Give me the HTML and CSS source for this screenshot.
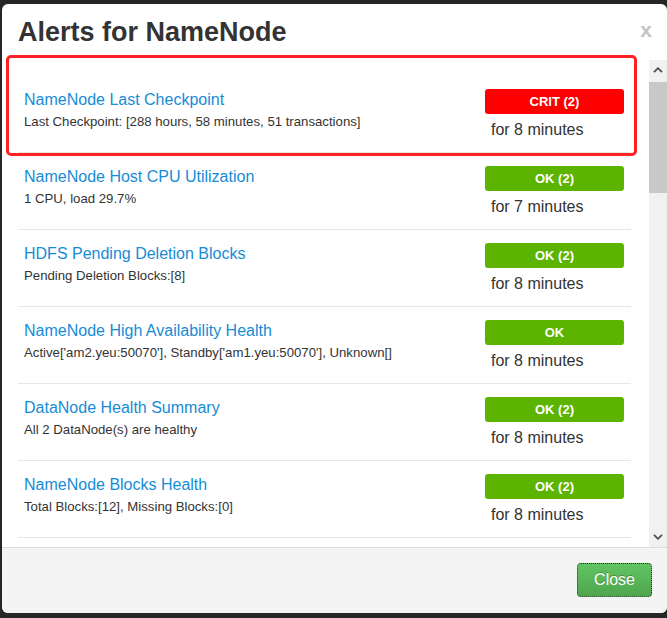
FILE: index.html
```html
<!DOCTYPE html>
<html>
<head>
<meta charset="utf-8">
<link rel="stylesheet" href="styles.css">
</head>
<body>
<div class="modal">
  <div class="modal-header">
    <h3 class="modal-title">Alerts for NameNode</h3>
    <span class="close">x</span>
  </div>
  <div class="modal-body">
    <div class="content">
      <ul class="alerts">
        <li class="alert">
          <div class="info">
            <a class="name">NameNode Last Checkpoint</a>
            <div class="desc">Last Checkpoint: [288 hours, 58 minutes, 51 transactions]</div>
          </div>
          <div class="state">
            <span class="badge crit">CRIT (2)</span>
            <div class="since">for 8 minutes</div>
          </div>
        </li>
        <li class="alert">
          <div class="info">
            <a class="name">NameNode Host CPU Utilization</a>
            <div class="desc">1 CPU, load 29.7%</div>
          </div>
          <div class="state">
            <span class="badge ok">OK (2)</span>
            <div class="since">for 7 minutes</div>
          </div>
        </li>
        <li class="alert">
          <div class="info">
            <a class="name">HDFS Pending Deletion Blocks</a>
            <div class="desc">Pending Deletion Blocks:[8]</div>
          </div>
          <div class="state">
            <span class="badge ok">OK (2)</span>
            <div class="since">for 8 minutes</div>
          </div>
        </li>
        <li class="alert">
          <div class="info">
            <a class="name">NameNode High Availability Health</a>
            <div class="desc">Active['am2.yeu:50070'], Standby['am1.yeu:50070'], Unknown[]</div>
          </div>
          <div class="state">
            <span class="badge ok">OK</span>
            <div class="since">for 8 minutes</div>
          </div>
        </li>
        <li class="alert">
          <div class="info">
            <a class="name">DataNode Health Summary</a>
            <div class="desc">All 2 DataNode(s) are healthy</div>
          </div>
          <div class="state">
            <span class="badge ok">OK (2)</span>
            <div class="since">for 8 minutes</div>
          </div>
        </li>
        <li class="alert">
          <div class="info">
            <a class="name">NameNode Blocks Health</a>
            <div class="desc">Total Blocks:[12], Missing Blocks:[0]</div>
          </div>
          <div class="state">
            <span class="badge ok">OK (2)</span>
            <div class="since">for 8 minutes</div>
          </div>
        </li>
      </ul>
    </div>
    <div class="scrollbar">
      <div class="sb-btn">
        <svg width="10" height="6" viewBox="0 0 10 6"><path d="M1 5.2 L5 1.2 L9 5.2" fill="none" stroke="#505050" stroke-width="1.8"/></svg>
      </div>
      <div class="sb-track"><div class="sb-thumb"></div></div>
      <div class="sb-btn">
        <svg width="10" height="6" viewBox="0 0 10 6"><path d="M1 0.8 L5 4.8 L9 0.8" fill="none" stroke="#505050" stroke-width="1.8"/></svg>
      </div>
    </div>
  </div>
  <div class="modal-footer">
    <button class="btn-close">Close</button>
  </div>
  <div class="highlight"></div>
</div>
</body>
</html>
```
FILE: styles.css
```css
html, body {
  margin: 0;
  padding: 0;
  height: 100%;
  overflow: hidden;
}
body {
  background: #262626;
  font-family: "Liberation Sans", Arial, sans-serif;
  color: #333;
}
.modal {
  position: relative;
  margin: 4px 0 0 2px;
  width: 665px;
  height: 609px;
  background: #fff;
  border-radius: 6px;
  display: flex;
  flex-direction: column;
  overflow: hidden;
}
.modal-header {
  height: 56px;
  flex: none;
  display: flex;
  align-items: flex-start;
  justify-content: space-between;
  padding: 0 15px 0 16px;
  box-sizing: border-box;
}
.modal-title {
  margin: 13px 0 0 0;
  font-size: 27px;
  line-height: 30px;
  font-weight: bold;
  color: #333;
}
.close {
  margin-top: 14px;
  font-size: 21px;
  line-height: 24px;
  font-weight: bold;
  color: #c4c4c4;
}
.modal-body {
  height: 487px;
  flex: none;
  display: flex;
}
.content {
  flex: 1;
  overflow: hidden;
  padding: 16px 18px 0 16px;
}
.alerts {
  list-style: none;
  margin: 0;
  padding: 0;
}
.alert {
  display: flex;
  justify-content: space-between;
  padding: 13px 7px 11px 6px;
  border-bottom: 1px solid #e6e6e6;
}
.info {
  display: flex;
  flex-direction: column;
}
.name {
  font-size: 16px;
  line-height: 22px;
  color: #168cd6;
}
.desc {
  font-size: 13.2px;
  line-height: 22px;
  color: #333;
}
.state {
  width: 139px;
  display: flex;
  flex-direction: column;
}
.badge {
  height: 25px;
  line-height: 25px;
  border-radius: 3px;
  text-align: center;
  color: #fff;
  font-size: 13px;
  font-weight: bold;
  margin-bottom: 5px;
}
.badge.crit { background: #ff0000; }
.badge.ok { background: #5cb400; }
.since {
  font-size: 16px;
  line-height: 22px;
  padding-left: 6px;
  color: #333;
}
.scrollbar {
  width: 18px;
  flex: none;
  background: #f1f1f1;
  display: flex;
  flex-direction: column;
}
.sb-btn {
  height: 20px;
  display: flex;
  align-items: center;
  justify-content: center;
}
.sb-track {
  flex: 1;
}
.sb-thumb {
  height: 111px;
  margin-top: 2px;
  background: #c8c8c8;
}
.modal-footer {
  flex: 1;
  background: #f4f4f4;
  border-top: 1px solid #dcdcdc;
  display: flex;
  justify-content: flex-end;
  align-items: flex-start;
  padding: 15px 15px 0 15px;
}
.btn-close {
  height: 34px;
  padding: 0 16px;
  font-family: "Liberation Sans", Arial, sans-serif;
  font-size: 16px;
  color: #fff;
  text-shadow: 0 -1px 0 rgba(0,0,0,0.25);
  background: linear-gradient(#62c462, #4ea54e);
  border: 1px dotted #1f3f1f;
  border-radius: 4px;
}
.highlight {
  position: absolute;
  left: 4px;
  top: 51px;
  width: 625px;
  height: 95px;
  border: 3px solid #ff2222;
  border-radius: 5px;
}
```
